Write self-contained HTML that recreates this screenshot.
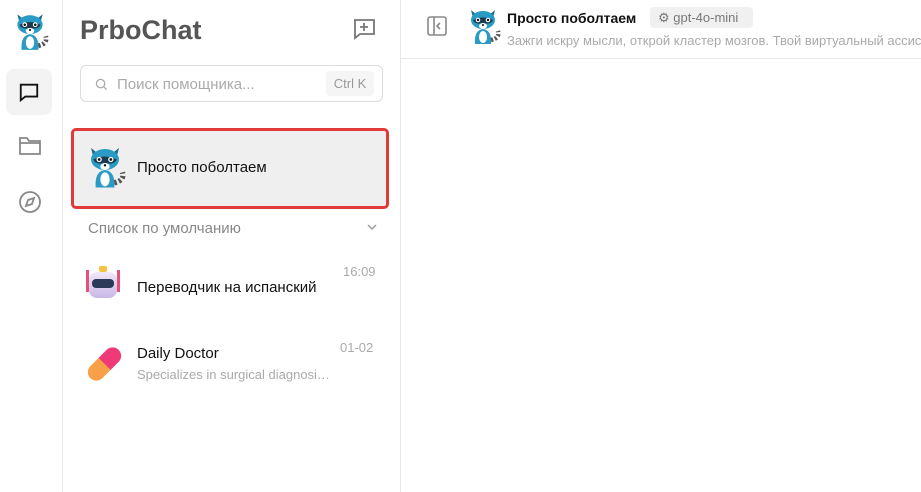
<!DOCTYPE html>
<html><head><meta charset="utf-8"><style>
*{box-sizing:border-box;margin:0;padding:0}
body{width:921px;height:492px;overflow:hidden;background:#fff;font-family:"Liberation Sans",sans-serif;position:relative;color:#111}
.rail{position:absolute;left:0;top:0;width:63px;height:492px;border-right:1px solid #e8e8e8;background:#fff}
.side{position:absolute;left:63px;top:0;width:338px;height:492px;border-right:1px solid #e8e8e8}
.main{position:absolute;left:401px;top:0;right:0;height:492px}
.hdr{height:59px;border-bottom:1px solid #e8e8e8;position:relative}
.abs{position:absolute}
</style></head><body>
<svg width="0" height="0" style="position:absolute"><defs>
<g id="rac">
<path d="M6 4 L12 9 L8 12Z M30 4 L24 9 L28 12Z" fill="#1a6e8e"/>
<ellipse cx="18" cy="14" rx="12" ry="9" fill="#2a9bc4"/>
<path d="M8 14 Q18 9 28 14 Q26 19 18 17 Q10 19 8 14Z" fill="#1b3b4d"/>
<circle cx="13" cy="14" r="2.3" fill="#fff"/><circle cx="23" cy="14" r="2.3" fill="#fff"/>
<circle cx="13" cy="14" r="1.2" fill="#111"/><circle cx="23" cy="14" r="1.2" fill="#111"/>
<ellipse cx="18" cy="20" rx="4" ry="3" fill="#fff"/><circle cx="18" cy="19" r="1" fill="#111"/>
<path d="M10 38 Q9 24 18 23 Q27 24 26 38Z" fill="#2a9bc4"/>
<ellipse cx="18" cy="31" rx="4" ry="6" fill="#fff"/>
<path d="M26 34 Q35 32 33 25" stroke="#555" stroke-width="4.5" fill="none" stroke-dasharray="2 2"/>
</g></defs></svg>

<div class="rail">
<svg class="abs" style="left:11px;top:10px" width="38" height="42" viewBox="0 0 36 40"><use href="#rac"/></svg>
<div class="abs" style="left:6px;top:69px;width:46px;height:46px;background:#f3f3f3;border-radius:8px"></div>
<svg class="abs" style="left:18px;top:81px" width="22" height="22" viewBox="0 0 24 24" fill="none" stroke="#111" stroke-width="2"><path d="M3 4h18v13H8l-5 4z"/></svg>
<svg class="abs" style="left:18px;top:135px" width="24" height="22" viewBox="0 0 24 22" fill="none" stroke="#888" stroke-width="1.8"><path d="M2 3h7l2 3h11v13H2z M2 8h20"/></svg>
<svg class="abs" style="left:18px;top:190px" width="24" height="24" viewBox="0 0 24 24" fill="none" stroke="#888" stroke-width="1.8"><circle cx="12" cy="12" r="10"/><path d="M16 8l-2 6-6 2 2-6z"/></svg>
</div>

<div class="side">
<div class="abs" style="left:17px;top:15px;font-size:27px;font-weight:bold;color:#555">PrboChat</div>
<svg class="abs" style="left:289px;top:18px" width="24" height="22" viewBox="0 0 24 22" fill="none" stroke="#777" stroke-width="1.8"><path d="M2 2h20v14H8l-5 4V2z M12 5v8 M8 9h8"/></svg>
<div class="abs" style="left:17px;top:65px;width:303px;height:37px;border:1px solid #ddd;border-radius:6px">
<svg class="abs" style="left:14px;top:12px" width="13" height="13" viewBox="0 0 14 14" fill="none" stroke="#aaa" stroke-width="1.4"><circle cx="6" cy="6" r="4.5"/><path d="M9.5 9.5l3 3"/></svg>
<div class="abs" style="left:36px;top:10px;font-size:15px;color:#aaa">Поиск помощника...</div>
<div class="abs" style="left:245px;top:5px;width:48px;height:25px;background:#f5f5f5;border-radius:4px;font-size:13px;color:#999;text-align:center;line-height:25px">Ctrl K</div>
</div>
<div class="abs" style="left:8px;top:128px;width:318px;height:81px;border:3px solid #e03a3a;border-radius:5px;background:#efefef"></div>
<svg class="abs" style="left:21px;top:143px" width="42" height="47" viewBox="0 0 36 40"><use href="#rac"/></svg>
<div class="abs" style="left:74px;top:159px;font-size:15px">Просто поболтаем</div>
<div class="abs" style="left:25px;top:220px;font-size:15px;color:#888">Список по умолчанию</div>
<svg class="abs" style="left:303px;top:223px" width="12" height="8" viewBox="0 0 12 8" fill="none" stroke="#999" stroke-width="1.4"><path d="M2 2l4 4 4-4"/></svg>
<div class="abs" style="left:26px;top:272px;width:28px;height:26px;border-radius:8px;background:linear-gradient(#f0e8f8,#c9b8e8)"></div>
<div class="abs" style="left:29px;top:279px;width:22px;height:9px;border-radius:4px;background:#2b3a58"></div>
<div class="abs" style="left:36px;top:266px;width:8px;height:6px;background:#f5c242;border-radius:2px"></div>
<div class="abs" style="left:23px;top:270px;width:3px;height:22px;background:#e8507a"></div>
<div class="abs" style="left:54px;top:270px;width:3px;height:22px;background:#e8507a"></div>
<div class="abs" style="left:74px;top:279px;font-size:15px">Переводчик на испанский</div>
<div class="abs" style="left:280px;top:264px;font-size:13px;color:#aaa">16:09</div>
<div class="abs" style="top:344px;width:17px;height:40px;border-radius:9px;background:linear-gradient(#f03a78 50%,#f8a048 50%);transform:rotate(45deg);left:33px"></div>
<div class="abs" style="left:74px;top:345px;font-size:15px">Daily Doctor</div>
<div class="abs" style="left:74px;top:367px;font-size:13px;color:#aaa">Specializes in surgical diagnosi…</div>
<div class="abs" style="left:277px;top:340px;font-size:13px;color:#aaa">01-02</div>
</div>

<div class="main"><div class="hdr">
<svg class="abs" style="left:26px;top:16px" width="20" height="20" viewBox="0 0 20 20" fill="none" stroke="#888" stroke-width="1.6"><rect x="1" y="1" width="18" height="18" rx="2"/><path d="M7 1v18 M13 7l-3 3 3 3"/></svg>
<svg class="abs" style="left:64px;top:5px" width="36" height="42" viewBox="0 0 36 40"><use href="#rac"/></svg>
<div class="abs" style="left:106px;top:10px;font-size:14px;font-weight:bold">Просто поболтаем</div>
<div class="abs" style="left:249px;top:7px;width:103px;height:21px;background:#f0f0f0;border-radius:4px;font-size:13px;color:#777;line-height:21px;padding-left:8px">⚙ gpt-4o-mini</div>
<div class="abs" style="left:106px;top:33px;font-size:13px;color:#aaa;white-space:nowrap">Зажги искру мысли, открой кластер мозгов. Твой виртуальный ассистент</div>
</div></div>
</body></html>
